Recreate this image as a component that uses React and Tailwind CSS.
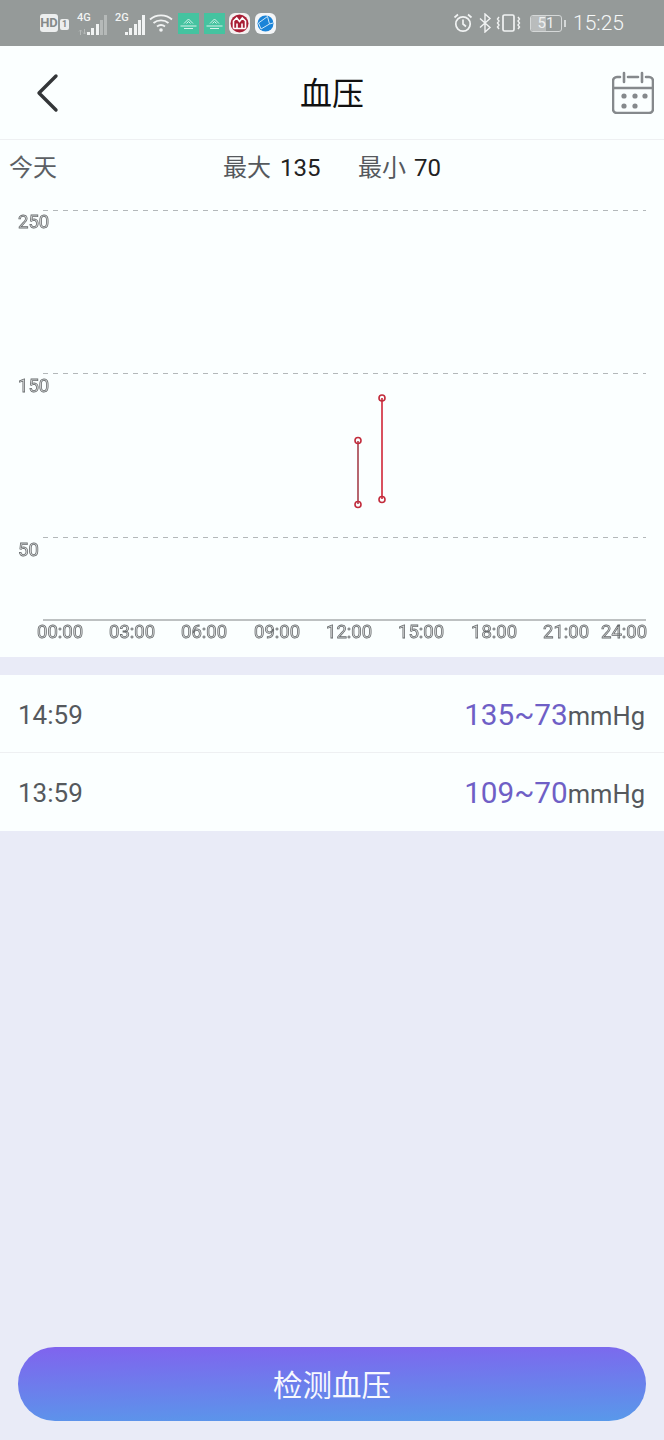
const font = { fontFamily: 'Roboto, "Noto Sans CJK SC", sans-serif' }

const hours = [
  ['00:00', 37], ['03:00', 109], ['06:00', 181], ['09:00', 254],
  ['12:00', 326], ['15:00', 398], ['18:00', 471], ['21:00', 543], ['24:00', 601],
]

function SignalBars({ dim }) {
  const heights = [3, 7, 11, 15, 20]
  return (
    <div className="flex items-end gap-[1.25px] h-[20px]">
      {heights.map((h, i) => (
        <span
          key={h}
          className={i > 2 && dim ? 'w-[3px] bg-[#b5b9b8]' : 'w-[3px] bg-[#f1f3f3]'}
          style={{ height: h }}
        />
      ))}
    </div>
  )
}

function TealApp() {
  return (
    <svg width="21" height="21" viewBox="0 0 21 21" className="shrink-0">
      <rect width="21" height="21" fill="#45c3a0" />
      <path d="M6 10.500l4.500-4.500 4.500 4.500M8.500 10.500l2-2 2 2M2.500 13h16M6 15.500h9" fill="none" stroke="#d8f3eb" strokeWidth="1" />
    </svg>
  )
}

function StatusBar() {
  return (
    <div className="h-[46px] bg-[#959a99] flex items-center pl-[40px] pr-[40px] text-[#f1f3f3]">
      <div className="flex items-center">
        <div className="w-[18px] h-[18px] rounded-[3px] bg-[#eceeee] text-[#858a89] text-[13px] font-bold leading-[18px] text-center">HD</div>
        <div className="ml-[2px] mt-[3px] w-[9px] h-[11px] rounded-[2px] bg-[#eceeee] text-[#858a89] text-[9px] font-bold leading-[11px] text-center">1</div>
        <div className="ml-[8px] relative w-[30px] h-[24px] flex items-end justify-end">
          <span className="absolute left-0 top-[1px] text-[11px] leading-[12px] font-medium">4G</span>
          <svg width="9" height="6" viewBox="0 0 9 6" fill="none" stroke="#b5b9b8" strokeWidth="1" className="absolute left-[1px] bottom-[0px]">
            <path d="M2.500 6V1M1 2.500l1.500-1.500 1.500 1.500M6.500 0v5M5 3.500l1.500 1.500 1.500-1.500" />
          </svg>
          <SignalBars dim />
        </div>
        <div className="ml-[8px] relative w-[30px] h-[24px] flex items-end justify-end">
          <span className="absolute left-0 top-[1px] text-[11px] leading-[12px] font-medium">2G</span>
          <SignalBars />
        </div>
        <svg width="24" height="20" viewBox="0 0 24 20" fill="none" stroke="#f1f3f3" strokeWidth="1.800" className="ml-[4px]">
          <path d="M1 6.500C7 1 17 1 23 6.500M4.500 10c4.200-3.600 10.800-3.600 15 0M8 13.500c2.400-1.800 5.600-1.800 8 0" />
          <circle cx="12" cy="17" r="1.800" fill="#f1f3f3" stroke="none" />
        </svg>
        <div className="ml-[5px] flex gap-[5px] items-center">
          <TealApp />
          <TealApp />
        </div>
        <svg width="21" height="21" viewBox="0 0 21 21" className="ml-[4px]">
          <rect width="21" height="21" rx="6" fill="#f4f1f1" />
          <circle cx="10.500" cy="10.500" r="9" fill="#a81e35" />
          <path d="M4.500 15.500V8l3.200-3 2.800 3.500L13.300 5l3.200 3v7.500M8 15.500v-5M13 15.500v-5M4.500 15.500h12" fill="none" stroke="#fff" strokeWidth="1.600" />
        </svg>
        <svg width="21" height="21" viewBox="0 0 21 21" className="ml-[5px]">
          <rect width="21" height="21" rx="6" fill="#f4f6f8" />
          <circle cx="10.500" cy="10.500" r="8" fill="#1b84d8" />
          <path d="M3.500 10l9-6.500M6 16l8.500-5-2-7.500M6 16l-2.500-6M14.500 11l3.500-1" fill="none" stroke="#cfe8f8" strokeWidth="1" />
        </svg>
      </div>
      <div className="ml-auto flex items-center">
        <svg width="20" height="20" viewBox="0 0 20 20" fill="none" stroke="#f1f3f3" strokeWidth="1.700">
          <circle cx="10" cy="11" r="7.200" />
          <path d="M10 6.500V11l3 2.500M1.500 4.500L5 1.500M18.500 4.500L15 1.500" />
        </svg>
        <svg width="14" height="20" viewBox="0 0 14 20" fill="none" stroke="#f1f3f3" strokeWidth="1.400" className="ml-[5px]">
          <path d="M2 5.500l10 9L7 19V1l5 4.500-10 9" />
        </svg>
        <svg width="26" height="20" viewBox="0 0 26 20" fill="none" stroke="#f1f3f3" strokeWidth="1.700" className="ml-[4px]">
          <rect x="7" y="2" width="11" height="16" rx="1.500" />
          <path d="M3 4l-1.500 2L3 8l-1.500 2L3 12l-1.500 2L3 16M22 4l1.500 2L22 8l1.500 2L22 12l1.500 2L22 16" strokeWidth="1.400" />
        </svg>
        <div className="ml-[8px] relative w-[32px] h-[17px] rounded-[3px] border border-[#d5d8d8] overflow-hidden text-[15px] leading-[15px] text-center text-[#eef0f0]">
          <div className="absolute inset-y-0 left-0 w-[51%] bg-[#b9bcbc]" />
          <span className="relative">51</span>
        </div>
        <div className="ml-[2px] w-[2px] h-[7px] bg-[#d5d8d8]" />
        <span className="ml-[7px] text-[21px] font-light leading-none text-[#f6f8f8]">15:25</span>
      </div>
    </div>
  )
}

function Header() {
  return (
    <div className="h-[94px] border-b border-[#eef0f2] grid grid-cols-[1fr_auto_1fr] items-center px-[9px]">
      <svg width="24" height="40" viewBox="0 0 24 40" fill="none" stroke="#333638" strokeWidth="3.400" strokeLinecap="round" strokeLinejoin="round" className="ml-[27px]">
        <path d="M20 3L3 20l17 17" />
      </svg>
      <h1 className="text-[32px] leading-none text-[#111] pt-[2px]">血压</h1>
      <svg width="42" height="43" viewBox="0 0 42 43" fill="none" stroke="#85898c" strokeWidth="2.600" strokeLinecap="round" className="justify-self-end mr-[1px]">
        <path d="M8 6H5a4 4 0 0 0-4 4v28a4 4 0 0 0 4 4h32a4 4 0 0 0 4-4V10a4 4 0 0 0-4-4h-3M16 6h10M12 2v9M30 2v9M1 17h40" />
        <g fill="#85898c" stroke="none">
          <circle cx="12" cy="25" r="2.600" />
          <circle cx="23" cy="25" r="2.600" />
          <circle cx="33" cy="25" r="2.600" />
          <circle cx="12" cy="35" r="2.600" />
          <circle cx="23" cy="35" r="2.600" />
        </g>
      </svg>
    </div>
  )
}

function Summary() {
  return (
    <div className="h-[56px] flex items-center pl-[9px] text-[24px] leading-none">
      <span className="w-[214px] text-[#5c6064]">今天</span>
      <span className="w-[135px] text-[#55595d]">最大 <span className="ml-[3px] text-[#222]">135</span></span>
      <span className="text-[#55595d]">最小 <span className="ml-[2px] text-[#222]">70</span></span>
    </div>
  )
}

function Chart() {
  // svg starts at y=196 in the page
  const gy = [14, 177, 341]
  const labels = [['250', 18, 32], ['150', 18, 196], ['50', 18, 360]]
  return (
    <svg width="664" height="461" className="block will-change-transform" style={font}>
      {gy.map((y) => (
        <line key={y} x1="43" x2="646" y1={y + 0.5} y2={y + 0.5} stroke="#b3b8ba" strokeWidth="1.200" strokeDasharray="5 5" />
      ))}
      <line x1="43" x2="646" y1="424" y2="424" stroke="#a9adae" strokeWidth="1.300" />
      {labels.map(([t, x, y]) => (
        <text key={t} x={x} y={y} fontSize="18.500" fill="#e4e6e6" stroke="#696d6f" strokeWidth="0.800">{t}</text>
      ))}
      {hours.map(([t, x]) => (
        <text key={t} x={x} y="442" fontSize="18.500" fill="#e4e6e6" stroke="#696d6f" strokeWidth="0.800">{t}</text>
      ))}
      <g fill="none" strokeWidth="1.600">
        <line x1="358" x2="358" y1="245" y2="308" stroke="#a5404c" />
        <line x1="382" x2="382" y1="202" y2="303" stroke="#d9515f" strokeWidth="2" />
        <g stroke="#c22c3c">
          <circle cx="358" cy="244.500" r="3" />
          <circle cx="358" cy="308.500" r="3" />
          <circle cx="382" cy="202" r="3" />
          <circle cx="382" cy="303.500" r="3" />
        </g>
      </g>
    </svg>
  )
}

function Row({ time, value, last }) {
  return (
    <div className={`h-[78px] flex items-center justify-between pl-[18px] pr-[19px] pt-[3px] ${last ? '' : 'border-b border-[#eef0f2]'}`}>
      <span className="text-[26px] text-[#55595d]">{time}</span>
      <span className="text-[25.5px] text-[#55595d]">
        <span className="text-[29.7px] text-[#6f5fc6]">{value}</span>mmHg
      </span>
    </div>
  )
}

export default function App() {
  return (
    <div className="w-[664px] h-[1440px] bg-[#e9ebf7] flex flex-col" style={font}>
      <StatusBar />
      <div className="bg-[#fbffff]">
        <Header />
        <Summary />
        <Chart />
      </div>
      <div className="mt-[18px] bg-[#fbffff]">
        <Row time="14:59" value="135~73" />
        <Row time="13:59" value="109~70" last />
      </div>
      <button className="mt-auto mb-[19px] mx-[18px] h-[74px] rounded-full bg-[linear-gradient(179deg,#8063ee,#5899ea)] text-[#f7f8fe] text-[29.5px] pt-[4px]">
        检测血压
      </button>
    </div>
  )
}
